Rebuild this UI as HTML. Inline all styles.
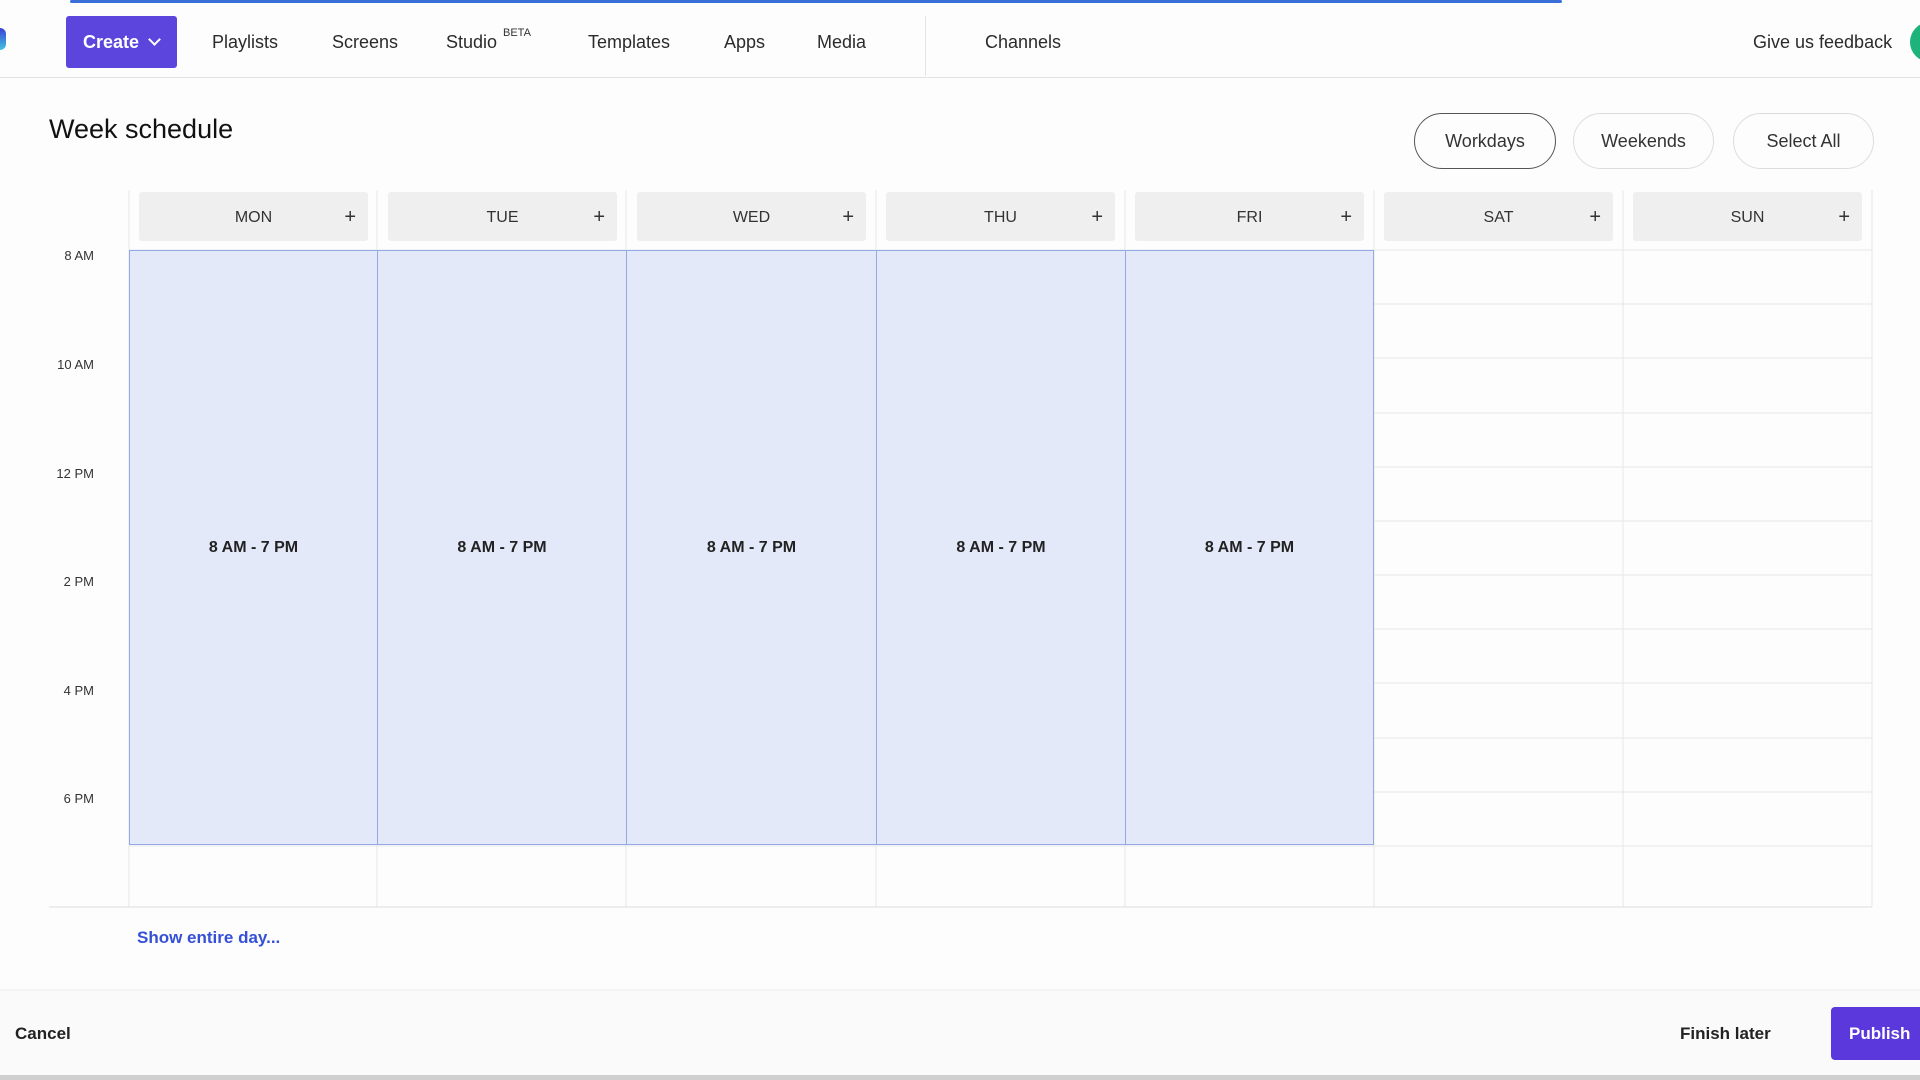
<!DOCTYPE html>
<html><head><meta charset="utf-8"><style>
*{margin:0;padding:0;box-sizing:border-box}
body{width:1920px;height:1080px;background:#fdfdfd;font-family:"Liberation Sans",sans-serif;color:#222;position:relative;overflow:hidden}
.a{position:absolute}
.nav{font-size:18px;color:#2b2b2b;top:32px}
.hd{position:absolute;top:192px;height:49px;background:#efefef;border-radius:3px;font-size:16px;color:#333}
.hd span{position:absolute;left:0;right:0;top:17px;text-align:center}
.hd b{position:absolute;right:12px;top:14px;font-weight:normal;font-size:20px}
.pill{position:absolute;top:113px;height:56px;border:1px solid #ddd;border-radius:28px;font-size:18px;text-align:center;line-height:54px;color:#333}
.tl{position:absolute;left:40px;width:54px;text-align:right;font-size:13px;color:#333}
.blk{position:absolute;top:250px;height:595px;background:#e4e9f9;border:1.5px solid #93a9e6;font-size:16px;font-weight:bold;color:#222;text-align:center;padding-top:288px}
</style></head><body>
<div class="a" style="left:70px;top:0;width:1492px;height:3px;background:#3a6fd8;border-radius:2px"></div>
<div class="a" style="left:-6px;top:28px;width:12px;height:22px;background:linear-gradient(#3b3fd6,#3fc6e0);border-radius:6px"></div>
<div class="a" style="left:66px;top:16px;width:111px;height:52px;background:#5b45dc;border-radius:3px;color:#fff;font-size:18px;font-weight:bold;line-height:52px;padding-left:17px">Create <span style="display:inline-block;width:9px;height:9px;border-right:2.5px solid #fff;border-bottom:2.5px solid #fff;transform:rotate(45deg);margin-left:6px;position:relative;top:-4px"></span></div>
<div class="a nav" style="left:212px">Playlists</div>
<div class="a nav" style="left:332px">Screens</div>
<div class="a nav" style="left:446px">Studio</div>
<div class="a" style="left:503px;top:27px;font-size:11px;color:#333">BETA</div>
<div class="a nav" style="left:588px">Templates</div>
<div class="a nav" style="left:724px">Apps</div>
<div class="a nav" style="left:817px">Media</div>
<div class="a" style="left:925px;top:16px;width:1px;height:60px;background:#e5e5e5"></div>
<div class="a nav" style="left:985px">Channels</div>
<div class="a nav" style="left:1753px">Give us feedback</div>
<div class="a" style="left:1910px;top:22px;width:40px;height:40px;border-radius:50%;background:#1db37a"></div>
<div class="a" style="left:0;top:77px;width:1920px;height:1px;background:#e3e3e3"></div>

<div class="a" style="left:49px;top:114px;font-size:27px;color:#111">Week schedule</div>
<div class="pill" style="left:1414px;width:142px;border:1.5px solid #555">Workdays</div>
<div class="pill" style="left:1573px;width:141px">Weekends</div>
<div class="pill" style="left:1733px;width:141px">Select All</div>

<div class="hd" style="left:139px;width:229px"><span>MON</span><b>+</b></div>
<div class="hd" style="left:388px;width:229px"><span>TUE</span><b>+</b></div>
<div class="hd" style="left:637px;width:229px"><span>WED</span><b>+</b></div>
<div class="hd" style="left:886px;width:229px"><span>THU</span><b>+</b></div>
<div class="hd" style="left:1135px;width:229px"><span>FRI</span><b>+</b></div>
<div class="hd" style="left:1384px;width:229px"><span>SAT</span><b>+</b></div>
<div class="hd" style="left:1633px;width:229px"><span>SUN</span><b>+</b></div>

<svg class="a" style="left:0;top:0" width="1920" height="1080">
<g stroke="#e6e6e6" stroke-width="1">
<line x1="129" y1="190" x2="129" y2="907"/><line x1="377" y1="190" x2="377" y2="907"/><line x1="626" y1="190" x2="626" y2="907"/><line x1="876" y1="190" x2="876" y2="907"/><line x1="1125" y1="190" x2="1125" y2="907"/><line x1="1374" y1="190" x2="1374" y2="907"/><line x1="1623" y1="190" x2="1623" y2="907"/><line x1="1872" y1="190" x2="1872" y2="907"/>
<line x1="129" y1="250" x2="1872" y2="250"/><line x1="1374" y1="304" x2="1872" y2="304"/><line x1="1374" y1="358" x2="1872" y2="358"/><line x1="1374" y1="413" x2="1872" y2="413"/><line x1="1374" y1="467" x2="1872" y2="467"/><line x1="1374" y1="521" x2="1872" y2="521"/><line x1="1374" y1="575" x2="1872" y2="575"/><line x1="1374" y1="629" x2="1872" y2="629"/><line x1="1374" y1="683" x2="1872" y2="683"/><line x1="1374" y1="738" x2="1872" y2="738"/><line x1="1374" y1="792" x2="1872" y2="792"/><line x1="129" y1="846" x2="1872" y2="846"/>
<line x1="49" y1="907" x2="1872" y2="907" stroke="#ddd"/>
<line x1="0" y1="990" x2="1920" y2="990" stroke="#ebebeb"/>
</g></svg>

<div class="blk" style="left:129px;width:249px">8 AM - 7 PM</div>
<div class="blk" style="left:377px;width:250px">8 AM - 7 PM</div>
<div class="blk" style="left:626px;width:251px">8 AM - 7 PM</div>
<div class="blk" style="left:876px;width:250px">8 AM - 7 PM</div>
<div class="blk" style="left:1125px;width:249px">8 AM - 7 PM</div>

<div class="tl" style="top:248px">8 AM</div>
<div class="tl" style="top:357px">10 AM</div>
<div class="tl" style="top:466px">12 PM</div>
<div class="tl" style="top:574px">2 PM</div>
<div class="tl" style="top:683px">4 PM</div>
<div class="tl" style="top:791px">6 PM</div>

<div class="a" style="left:137px;top:928px;font-size:17px;font-weight:bold;color:#3550d6">Show entire day...</div>
<div class="a" style="left:0;top:991px;width:1920px;height:84px;background:#fafafa"></div>
<div class="a" style="left:15px;top:1024px;font-size:17px;font-weight:bold;color:#222">Cancel</div>
<div class="a" style="left:1680px;top:1024px;font-size:17px;font-weight:bold;color:#222">Finish later</div>
<div class="a" style="left:1831px;top:1007px;width:100px;height:53px;background:#5b38dc;border-radius:4px;color:#fff;font-size:17px;font-weight:bold;line-height:53px;padding-left:18px">Publish</div>
<div class="a" style="left:0;top:1075px;width:1920px;height:5px;background:#cfcfcf"></div>
</body></html>
